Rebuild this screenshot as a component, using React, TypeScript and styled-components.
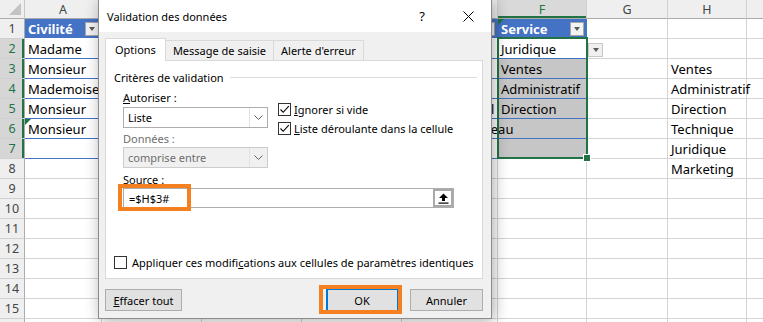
import React from "react";
import styled, { createGlobalStyle, css } from "styled-components";

const GlobalStyle = createGlobalStyle`
  html, body {
    margin: 0;
    padding: 0;
    background: #fff;
  }
  body {
    overflow: hidden;
  }
`;

const GREEN = "#217346";
const BLUE = "#4472c4";
const ORANGE = "#f4801f";

const Page = styled.div`
  position: relative;
  width: 763px;
  height: 322px;
  overflow: hidden;
  background: #fff;
`;

// ---- spreadsheet ----

const Sheet = styled.div`
  display: grid;
  grid-template-columns: 25px 77px 100px 100px 100px 96px 89px 81px 79px 60px;
  grid-template-rows: 19px;
  grid-auto-rows: 20px;
  font-family: "Noto Sans", sans-serif;
  font-size: 13px;
  color: #000;
`;

const Corner = styled.div`
  position: relative;
  background: #efefef;
  border-right: 1px solid #c8c8c8;
  border-bottom: 1px solid #ababab;
  &::after {
    content: "";
    position: absolute;
    right: 3px;
    bottom: 3px;
    border-left: 12px solid transparent;
    border-bottom: 12px solid #c3c3c3;
  }
`;

const ColHead = styled.div<{ $selected?: boolean }>`
  display: flex;
  align-items: center;
  justify-content: center;
  box-sizing: border-box;
  font-size: 12.5px;
  color: #444;
  background: #efefef;
  border-right: 1px solid #d0d0d0;
  border-bottom: 1px solid #ababab;
  ${(p) =>
    p.$selected &&
    css`
      background: #d9d9d9;
      color: ${GREEN};
      box-shadow: inset 0 -2px 0 ${GREEN};
    `}
`;

const RowHead = styled.div<{ $selected?: boolean }>`
  display: flex;
  align-items: center;
  justify-content: center;
  box-sizing: border-box;
  font-size: 12.5px;
  color: #444;
  background: #efefef;
  border-right: 1px solid #ababab;
  border-bottom: 1px solid #d0d0d0;
  ${(p) =>
    p.$selected &&
    css`
      background: #d6d6d6;
      color: ${GREEN};
      box-shadow: inset -2px 0 0 ${GREEN};
    `}
`;

const Cell = styled.div<{
  $kind: "head" | "body" | "plain";
  $shade?: boolean;
  $spill?: boolean;
  $lift?: boolean;
}>`
  position: relative;
  display: flex;
  align-items: center;
  box-sizing: border-box;
  padding: 0 2px 0 3px;
  white-space: nowrap;
  overflow: ${(p) => (p.$spill || p.$lift ? "visible" : "hidden")};
  background: #fff;
  border-right: 1px solid #d4d4d4;
  border-bottom: 1px solid #d4d4d4;
  ${(p) =>
    p.$kind === "head" &&
    css`
      background: ${BLUE};
      color: #fff;
      font-weight: 700;
      border-right-color: ${BLUE};
      border-bottom-color: #fff;
    `}
  ${(p) =>
    p.$kind === "body" &&
    css`
      border-bottom-color: ${BLUE};
    `}
  ${(p) =>
    p.$shade &&
    css`
      background: #c6c6c6;
    `}
  ${(p) =>
    p.$spill &&
    css`
      z-index: 1;
    `}
  ${(p) =>
    p.$lift &&
    css`
      z-index: 2;
    `}
`;

const FilterBtn = styled.span`
  margin-left: auto;
  flex-shrink: 0;
  width: 14px;
  height: 14px;
  box-sizing: border-box;
  background: #f3f3f3;
  border: 1px solid #a6a6a6;
  display: flex;
  align-items: center;
  justify-content: center;
  &::after {
    content: "";
    border-left: 3.5px solid transparent;
    border-right: 3.5px solid transparent;
    border-top: 4px solid #595959;
  }
`;

const ListDrop = styled(FilterBtn)`
  position: absolute;
  left: calc(100% + 2px);
  top: 4px;
  width: 15px;
  background: #f0f0f0;
  border-color: #c8c8c8;
`;

const ErrorMark = styled.span`
  position: absolute;
  left: 0;
  top: 0;
  border-top: 6px solid ${GREEN};
  border-right: 6px solid transparent;
`;

const Selection = styled.div`
  position: absolute;
  left: -1px;
  top: -2px;
  width: 91px;
  height: 122px;
  box-sizing: border-box;
  border: 2px solid ${GREEN};
  pointer-events: none;
`;

const FillHandle = styled.span`
  position: absolute;
  right: -5px;
  bottom: -5px;
  width: 6px;
  height: 6px;
  background: ${GREEN};
  border: 1px solid #fff;
`;

// ---- dialog ----

const Dialog = styled.div`
  position: absolute;
  z-index: 10;
  left: 98px;
  top: -1px;
  width: 394px;
  height: 320px;
  box-sizing: border-box;
  display: flex;
  flex-direction: column;
  background: #f0f0f0;
  border: 1px solid #8c8c8c;
  box-shadow: 2px 2px 14px rgba(0, 0, 0, 0.32);
  font-family: "Noto Sans", sans-serif;
  font-size: 11px;
  color: #000;
`;

const TitleBar = styled.div`
  display: flex;
  align-items: center;
  height: 32px;
  flex-shrink: 0;
  background: #fff;
  padding-left: 8px;
`;

const Title = styled.span`
  flex: 1;
  font-size: 11px;
`;

const TitleBtn = styled.span`
  width: 46px;
  height: 32px;
  display: flex;
  align-items: center;
  justify-content: center;
  font-size: 13px;
`;

const Body = styled.div`
  display: flex;
  flex-direction: column;
  flex: 1;
  padding: 7px 8px 7px 6px;
`;

const TabBar = styled.div`
  display: flex;
  align-items: flex-end;
  height: 21px;
`;

const Tab = styled.div<{ $active?: boolean }>`
  display: flex;
  align-items: center;
  box-sizing: border-box;
  height: 20px;
  padding: 0 7px 1px;
  margin-left: -1px;
  background: #f0f0f0;
  border: 1px solid #d9d9d9;
  border-bottom: none;
  ${(p) =>
    p.$active &&
    css`
      position: relative;
      z-index: 1;
      height: 23px;
      margin: 0 0 -1px 0;
      padding: 0 9px 2px 9px;
      background: #fff;
    `}
`;

const Panel = styled.div`
  display: flex;
  flex-direction: column;
  height: 219px;
  box-sizing: border-box;
  background: #fff;
  border: 1px solid #d9d9d9;
  padding: 9px 5px 8px 8px;
`;

const GroupHead = styled.div`
  display: flex;
  align-items: center;
  height: 15px;
  &::after {
    content: "";
    flex: 1;
    height: 1px;
    margin-left: 6px;
    background: #dcdcdc;
  }
`;

const Fields = styled.div`
  padding-left: 9px;
`;

const FieldRow = styled.div`
  display: flex;
`;

const LeftCol = styled.div`
  display: flex;
  flex-direction: column;
  width: 145px;
`;

const FieldLabel = styled.div<{ $gap: number; $muted?: boolean }>`
  height: 15px;
  line-height: 15px;
  margin-top: ${(p) => p.$gap}px;
  color: ${(p) => (p.$muted ? "#6d6d6d" : "#000")};
`;

const Select = styled.div<{ $disabled?: boolean; $gap: number }>`
  display: flex;
  height: 21px;
  margin-top: ${(p) => p.$gap}px;
  box-sizing: border-box;
  border: 1px solid ${(p) => (p.$disabled ? "#cccccc" : "#adadad")};
  background: ${(p) => (p.$disabled ? "#f0f0f0" : "#fff")};
  color: ${(p) => (p.$disabled ? "#6d6d6d" : "#000")};
`;

const SelectValue = styled.span`
  flex: 1;
  display: flex;
  align-items: center;
  padding-left: 4px;
`;

const SelectArrow = styled.span`
  width: 17px;
  display: flex;
  align-items: center;
  justify-content: center;
  border-left: 1px solid #e1e1e1;
`;

const Checks = styled.div`
  display: flex;
  flex-direction: column;
  gap: 4px;
  padding-top: 17px;
  margin-left: 10px;
`;

const CheckRow = styled.div<{ $gap: number }>`
  display: flex;
  align-items: center;
  gap: ${(p) => p.$gap}px;
  height: 15px;
`;

const Box = styled.span`
  width: 13px;
  height: 13px;
  flex-shrink: 0;
  box-sizing: border-box;
  border: 1px solid #333;
  background: #fff;
  display: flex;
  align-items: center;
  justify-content: center;
`;

const SourceField = styled.div`
  position: relative;
  display: flex;
  align-items: center;
  width: 331px;
  height: 20px;
  margin-top: 1px;
  box-sizing: border-box;
  border: 1px solid #adadad;
  background: #fff;
`;

const SourceText = styled.span`
  flex: 1;
  padding-left: 5px;
`;

const PickBtn = styled.span`
  width: 20px;
  height: 18px;
  box-sizing: border-box;
  border: 2px solid #a9a9a9;
  background: #fff;
  display: flex;
  align-items: center;
  justify-content: center;
`;

const Highlight = styled.span<{ $inset: string }>`
  position: absolute;
  inset: ${(p) => p.$inset};
  border: 4px solid ${ORANGE};
  pointer-events: none;
`;

const ApplyRow = styled(CheckRow)`
  margin-top: auto;
`;

const Footer = styled.div`
  display: flex;
  align-items: center;
  margin-top: 10px;
  height: 22px;
`;

const Button = styled.span<{ $width: number; $default?: boolean }>`
  position: relative;
  display: flex;
  align-items: center;
  justify-content: center;
  width: ${(p) => p.$width}px;
  height: 22px;
  box-sizing: border-box;
  background: #e1e1e1;
  border: 1px solid #adadad;
  ${(p) =>
    p.$default &&
    css`
      border-color: #0078d7;
      box-shadow: inset 1px 0 0 #0078d7;
    `}
`;

const Spacer = styled.span`
  flex: 1;
`;

// ---- data ----

const COLS = ["A", "B", "C", "D", "E", "F", "G", "H", "I"];
const TABLE_COLS = ["A", "B", "C", "D", "E", "F"];
// cells whose text runs over the empty cell beside them
const SPILL = ["E6", "H4"];

const values: Record<string, string> = {
  A1: "Civilité",
  B1: "Nom",
  C1: "Prénom",
  D1: "Ville",
  E1: "Poste",
  F1: "Service",
  A2: "Madame",
  A3: "Monsieur",
  A4: "Mademoiselle",
  A5: "Monsieur",
  A6: "Monsieur",
  E5: "Ex-commercial",
  E6: "Chef de ce réseau",
  F2: "Juridique",
  F3: "Ventes",
  F4: "Administratif",
  F5: "Direction",
  H3: "Ventes",
  H4: "Administratif",
  H5: "Direction",
  H6: "Technique",
  H7: "Juridique",
  H8: "Marketing",
};

const rows = Array.from({ length: 16 }, (_, i) => i + 1);

const Chevron = () => (
  <svg width="9" height="5" viewBox="0 0 9 5">
    <path d="M0.5 0.5 L4.5 4.5 L8.5 0.5" fill="none" stroke="#606060" strokeWidth="1" />
  </svg>
);

const Tick = () => (
  <svg width="11" height="11" viewBox="0 0 11 11">
    <path d="M1.5 5.5 L4.2 8.3 L9.8 2.2" fill="none" stroke="#000" strokeWidth="1.1" />
  </svg>
);

const UploadIcon = () => (
  <svg width="11" height="11" viewBox="0 0 11 11">
    <polygon points="5.5,0.5 10,5 7,5 7,8 4,8 4,5 1,5" fill="#000" />
    <rect x="0.5" y="9.5" width="10" height="1.2" fill="#000" />
  </svg>
);

const CloseIcon = () => (
  <svg width="11" height="11" viewBox="0 0 11 11">
    <path d="M0.5 0.5 L10.5 10.5 M10.5 0.5 L0.5 10.5" stroke="#000" strokeWidth="1" />
  </svg>
);

const SheetCell = ({ col, row }: { col: string; row: number }) => {
  const id = col + row;
  const inTable = TABLE_COLS.includes(col) && row <= 7;
  const kind = inTable ? (row === 1 ? "head" : "body") : "plain";
  const shade = col === "F" && row >= 3 && row <= 7;
  const active = id === "F2";

  return (
    <Cell $kind={kind} $shade={shade} $spill={SPILL.includes(id)} $lift={active}>
      {(id === "F1" || id === "A6") && <ErrorMark />}
      {values[id]}
      {kind === "head" && <FilterBtn />}
      {active && (
        <>
          <ListDrop />
          <Selection>
            <FillHandle />
          </Selection>
        </>
      )}
    </Cell>
  );
};

const App = () => {
  return (
    <Page>
      <GlobalStyle />
      <Sheet>
        <Corner />
        {COLS.map((c) => (
          <ColHead key={c} $selected={c === "F"}>
            {c}
          </ColHead>
        ))}
        {rows.map((r) => (
          <React.Fragment key={r}>
            <RowHead $selected={r >= 2 && r <= 7}>{r}</RowHead>
            {COLS.map((c) => (
              <SheetCell key={c} col={c} row={r} />
            ))}
          </React.Fragment>
        ))}
      </Sheet>

      <Dialog>
        <TitleBar>
          <Title>Validation des données</Title>
          <TitleBtn>?</TitleBtn>
          <TitleBtn>
            <CloseIcon />
          </TitleBtn>
        </TitleBar>
        <Body>
          <TabBar>
            <Tab $active>Options</Tab>
            <Tab>Message de saisie</Tab>
            <Tab>Alerte d'erreur</Tab>
          </TabBar>
          <Panel>
            <GroupHead>Critères de validation</GroupHead>
            <Fields>
              <FieldRow>
                <LeftCol>
                  <FieldLabel $gap={5}>
                    <u>A</u>utoriser :
                  </FieldLabel>
                  <Select $gap={2}>
                    <SelectValue>Liste</SelectValue>
                    <SelectArrow>
                      <Chevron />
                    </SelectArrow>
                  </Select>
                  <FieldLabel $gap={3} $muted>
                    Données :
                  </FieldLabel>
                  <Select $gap={1} $disabled>
                    <SelectValue>comprise entre</SelectValue>
                    <SelectArrow>
                      <Chevron />
                    </SelectArrow>
                  </Select>
                </LeftCol>
                <Checks>
                  <CheckRow $gap={3}>
                    <Box>
                      <Tick />
                    </Box>
                    <span>
                      <u>I</u>gnorer si vide
                    </span>
                  </CheckRow>
                  <CheckRow $gap={3}>
                    <Box>
                      <Tick />
                    </Box>
                    <span>
                      <u>L</u>iste déroulante dans la cellule
                    </span>
                  </CheckRow>
                </Checks>
              </FieldRow>
              <FieldLabel $gap={4}>Source :</FieldLabel>
              <SourceField>
                <SourceText>=$H$3#</SourceText>
                <PickBtn>
                  <UploadIcon />
                </PickBtn>
                <Highlight $inset="-5px auto -4px -6px" style={{ width: 65 }} />
              </SourceField>
            </Fields>
            <ApplyRow $gap={5}>
              <Box />
              <span>
                Appliquer ces modifi<u>c</u>ations aux cellules de paramètres identiques
              </span>
            </ApplyRow>
          </Panel>
          <Footer>
            <Button $width={77}>
              <span>
                <u>E</u>ffacer tout
              </span>
            </Button>
            <Spacer />
            <Button $width={72} $default>
              OK
              <Highlight $inset="-5px -5px -4px -8px" />
            </Button>
            <Button $width={73} style={{ marginLeft: 12 }}>
              Annuler
            </Button>
          </Footer>
        </Body>
      </Dialog>
    </Page>
  );
};

export default App;
